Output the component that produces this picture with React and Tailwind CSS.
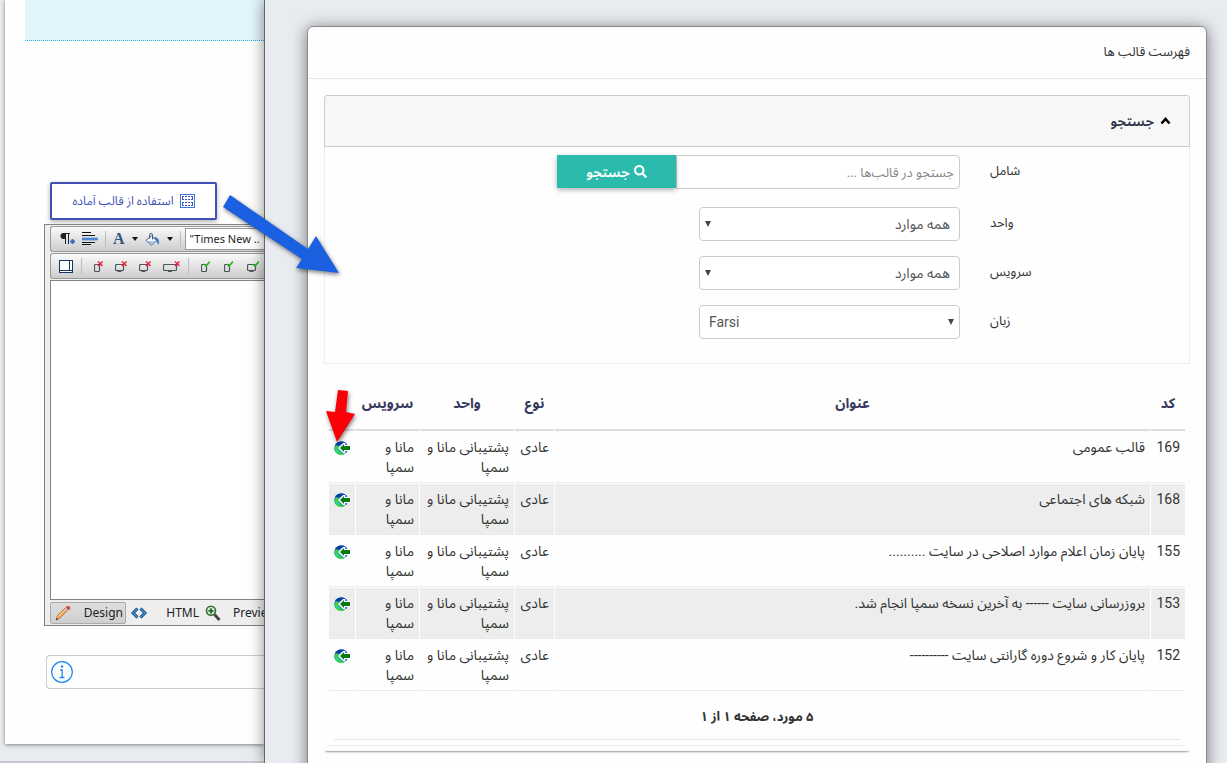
import React, { useState } from 'react';
import { FaSearch } from 'react-icons/fa';

const templates = [
  { code: 169, title: 'قالب عمومی' },
  { code: 168, title: 'شبکه های اجتماعی' },
  { code: 155, title: 'پایان زمان اعلام موارد اصلاحی در سایت ..........' },
  { code: 153, title: 'بروزرسانی سایت ------ به آخرین نسخه سمپا انجام شد.' },
  { code: 152, title: 'پایان کار و شروع دوره گارانتی سایت ----------' },
];

const TemplateIcon = () => (
  <svg width="15" height="14" viewBox="0 0 15 14" fill="none">
    <rect x="0.5" y="0.5" width="14" height="13" stroke="#3a78d0" />
    <path d="M2 2.500h11M2 5.500h11M2 8.500h11M2 11.500h11" stroke="#3f51b5" strokeDasharray="2 1" />
    <path d="M2.500 3v2M12.500 3v2M2.500 9v2M12.500 9v2" stroke="#3f51b5" />
  </svg>
);

const ParagraphIcon = () => (
  <svg width="16" height="16" viewBox="0 0 16 16">
    <path d="M4.5 2H11v1h-1v10H9V3H7v10H6V8H4.500A3 3 0 0 1 4.500 2z" fill="#222" />
    <path d="M11 10.500h5M13.500 8v5" stroke="#2f66c4" strokeWidth="1.800" />
  </svg>
);

const AlignIcon = () => (
  <svg width="16" height="16" viewBox="0 0 16 16">
    <path d="M0 1.500h9M0 4.500h13M0 11.500h13M0 13.500h9" stroke="#111" />
    <rect x="0.5" y="7" width="15" height="2" fill="#5d94e8" stroke="#2f66c4" strokeWidth="0.600" />
  </svg>
);

const BucketIcon = () => (
  <svg width="15" height="15" viewBox="0 0 16 16" fill="none">
    <path d="M1 9l6-5 5 5-5 5z" fill="#f8fbff" stroke="#33557f" />
    <path d="M2 9.500h9L7 13.500z" fill="#a9c4e4" />
    <path d="M5 7V3a1.500 1.500 0 0 1 3 0v5" stroke="#33557f" />
    <path d="M10 6c3-.5 5 1.500 4.500 7-1-1-2-2-2.500-5z" fill="#3d7bd6" stroke="#28559c" strokeWidth="0.500" />
  </svg>
);

const Caret = () => (
  <svg width="6" height="4" viewBox="0 0 6 4">
    <path d="M0 0h6L3 4z" fill="#111" />
  </svg>
);

const PanelIcon = () => (
  <svg width="14" height="13" viewBox="0 0 14 13" fill="#fff">
    <rect x="0.5" y="0.5" width="13" height="12" stroke="#17365f" />
    <path d="M10.500 1v9.500M1 10.500h12" stroke="#17365f" />
  </svg>
);

const ScreenIcon = ({ size, checked }) => {
  const w = { phone: 6, tablet: 9, wide: 14 }[size];
  return (
    <svg width={w + 3} height="13" viewBox={`0 0 ${w + 3} 13`} fill="none">
      <rect x="0.500" y="4.500" width={w - 1} height={size === 'phone' ? 7 : 6} rx="1" stroke="#4f545a" strokeWidth="1.200" />
      {size !== 'phone' && <path d={`M${w / 2 - 2} 11.500h4`} stroke="#4f545a" />}
      {checked ? (
        <path d={`M${w - 3} 4l2 2 4-4.500`} stroke="#1dbb1d" strokeWidth="1.600" />
      ) : (
        <path d={`M${w - 2} 1.500l4.500 4.500M${w + 2.5} 1.500l-4.500 4.500`} stroke="#e8173a" strokeWidth="1.400" />
      )}
    </svg>
  );
};

const PencilIcon = () => (
  <svg width="16" height="16" viewBox="0 0 16 16">
    <path d="M1 15l1.500-4.500L10 3l2.500 2.500-8 8z" fill="#e9a353" stroke="#9b5f22" strokeWidth="0.600" />
    <path d="M3.500 11.500L11 4" stroke="#f9d9a8" />
    <path d="M10.500 2.500L12 1q2-.5 3 1t-.5 2.500l-1 1z" fill="#d9474f" />
    <path d="M10 3l3 3" stroke="#b9bcc4" strokeWidth="1.200" />
    <path d="M1 15l.6-2L3 14.400z" fill="#222" />
  </svg>
);

const CodeIcon = () => (
  <svg width="16" height="12" viewBox="0 0 16 12" fill="none">
    <path d="M6.500 1.500L2 6l4.500 4.500M9.500 1.500L14 6l-4.500 4.500" stroke="#123c69" strokeWidth="3" />
    <path d="M6.500 1.500L2 6l4.500 4.500M9.500 1.500L14 6l-4.500 4.500" stroke="#3c9be0" strokeWidth="1.300" />
  </svg>
);

const PreviewIcon = () => (
  <svg width="16" height="16" viewBox="0 0 16 16" fill="none">
    <path d="M9.500 9.500L14.500 15" stroke="#444" strokeWidth="2.800" />
    <circle cx="6" cy="5.800" r="4.500" fill="#d9ecd6" stroke="#3c6b3c" strokeWidth="1.600" />
    <path d="M6 3.200v5.200M3.400 5.800h5.200" stroke="#1f6a2a" strokeWidth="1.800" />
  </svg>
);

const InsertIcon = () => (
  <svg width="16" height="14" viewBox="0 0 16 14">
    <circle cx="7" cy="7" r="6.800" fill="#2b86e6" />
    <path d="M1 4.500C2 1 6 0 9 .5L12 2 9 3 6 4 3 5z" fill="#0d3a9c" />
    <path d="M.3 7l2-3 2 1v3l3 4 4 .5A6.800 6.800 0 0 1 .3 7z" fill="#35d23c" />
    <path d="M1 8l2 1 1 3q-2.500-1-3-4z" fill="#35c9e8" />
    <path d="M9 2L4 7l5 5h2v-2h5V4h-5V2z" fill="#fff" />
    <path d="M6 7l4-4v2h6v4h-6v2z" fill="#0b7a0b" />
    <path d="M12 10.500h1.500L12 12zM12 3.500h1.500L12 2z" fill="#2b4fd0" />
  </svg>
);

const ToolSeparator = () => <span className="h-4 w-px bg-[#bdbdbd]" />;

const SelectField = ({ id, options, dir }) => (
  <div className="relative w-[261px]" dir={dir}>
    <select
      id={id}
      className="h-[34px] w-full appearance-none rounded border border-[#ccc] bg-white px-[9px] text-sm text-[#555]"
    >
      {options.map((option) => (
        <option key={option}>{option}</option>
      ))}
    </select>
    <svg className="pointer-events-none absolute end-[6px] top-[14px]" width="6" height="6" viewBox="0 0 6 6">
      <path d="M0 0h6L3 6z" fill="#444" />
    </svg>
  </div>
);

const FormRow = ({ id, label, children }) => (
  <div className="flex items-start gap-[30px]">
    <label htmlFor={id} className="w-[199px] shrink-0 text-left text-[13px] leading-8 text-[#333]">
      {label}
    </label>
    {children}
  </div>
);

const EditorPane = () => (
  <aside className="h-screen w-[264px] shrink-0 overflow-hidden border-b-2 border-[#c4c7cb] pl-[5px]">
    <div className="bg-[#fefefe] pb-[55px] shadow-[0_1px_4px_rgba(0,0,0,0.45)]">
      <div className="ml-5 h-[41px] border-b border-dotted border-[#1fb5d8] bg-[#e1f5fb]" />

      <div className="ml-[45px] pt-[141px]">
        <button
          dir="rtl"
          className="flex h-[38px] w-[167px] items-center justify-center gap-[6px] rounded-xs border-2 border-[#3f51b5] bg-white text-xs text-[#3f51b5] shadow-[0_2px_5px_rgba(0,0,0,0.3)]"
        >
          <TemplateIcon />
          استفاده از قالب آماده
        </button>
      </div>

      {/* Rich text editor, cut off by the dialog window */}
      <div className="mt-1 ml-[39px] border border-r-0 border-[#828282] bg-[#eee] pt-px pl-[5px] font-['Noto_Sans',sans-serif] text-xs text-[#222]">
        <div className="flex h-[26px] items-center gap-[7px] overflow-hidden rounded-l-[3px] border border-r-0 border-[#999] bg-linear-to-b from-[#fafafa] to-[#cdcdcd] pl-2 *:shrink-0">
          <ParagraphIcon />
          <AlignIcon />
          <ToolSeparator />
          <span className="font-['Liberation_Serif',serif] text-base font-bold text-[#33557f]">A</span>
          <Caret />
          <BucketIcon />
          <Caret />
          <div className="flex items-center gap-1">
            <ToolSeparator />
            <button className="h-[22px] w-[120px] border border-[#999] bg-white pl-1 text-left text-[11px] whitespace-nowrap">
              "Times New ..
            </button>
          </div>
        </div>
        <div className="mt-px flex h-[26px] items-center gap-2 overflow-hidden rounded-l-[3px] border border-r-0 border-[#999] bg-linear-to-b from-[#fafafa] to-[#cdcdcd] pl-2 *:shrink-0">
          <PanelIcon />
          <ToolSeparator />
          <div className="flex gap-3 pl-1">
            <ScreenIcon size="phone" />
            <ScreenIcon size="tablet" />
            <ScreenIcon size="tablet" />
            <ScreenIcon size="wide" />
          </div>
          <ToolSeparator />
          <div className="flex gap-[14px] pl-1">
            <ScreenIcon size="phone" checked />
            <ScreenIcon size="phone" checked />
            <ScreenIcon size="tablet" checked />
            <ScreenIcon size="tablet" checked />
          </div>
        </div>
        <div className="mt-px h-[320px] border border-r-0 border-[#828282] bg-white" />
        <div className="flex h-[25px] items-center">
          <button className="flex h-[22px] w-[76px] shrink-0 items-center justify-between rounded-xs border border-[#aaa] bg-linear-to-b from-[#dedede] to-[#cfcfcf] px-1 pr-[2px]">
            <PencilIcon />
            Design
          </button>
          <button className="flex w-[73px] shrink-0 items-center justify-between pl-[5px]">
            <CodeIcon />
            HTML
          </button>
          <button className="flex shrink-0 items-center gap-3 pl-[6px]">
            <PreviewIcon />
            Preview
          </button>
        </div>
      </div>

      <div className="mt-[29px] ml-[41px] flex h-[34px] items-center rounded-l border border-r-0 border-[#ccc] pl-1">
        <svg width="22" height="22" viewBox="0 0 22 22" fill="none">
          <circle cx="11" cy="11" r="10.300" stroke="#1e88f0" strokeWidth="1.200" />
          <circle cx="11" cy="5.500" r="1.200" fill="#1e88f0" />
          <path d="M9 9h2.200v7.500M8.500 16.500h5" stroke="#1e88f0" strokeWidth="1.300" />
        </svg>
      </div>
    </div>
  </aside>
);

const SearchPanel = () => {
  const [query, setQuery] = useState('');

  return (
    <div>
      <div className="flex h-[52px] items-center gap-[6px] rounded-t-[3px] border border-[#ccc] bg-[#f7f7f7] px-[18px] text-sm font-semibold text-[#2c3148]">
        <svg width="11" height="8" viewBox="0 0 11 8" fill="none">
          <path d="M1.500 6.500l4-4.500 4 4.500" stroke="#000" strokeWidth="2.600" />
        </svg>
        جستجو
      </div>
      <form
        className="flex flex-col gap-[15px] border border-t-0 border-[#eee] bg-[#fefefe] pt-2 pb-6"
        onSubmit={(e) => e.preventDefault()}
      >
        <FormRow id="query" label="شامل">
          <div className="flex h-[37px] items-start">
            <input
              id="query"
              value={query}
              onChange={(e) => setQuery(e.target.value)}
              placeholder="جستجو در قالب‌ها ..."
              className="h-[34px] w-[284px] rounded-r border border-[#ccc] bg-white px-[5px] text-[13px] placeholder:text-[#888]"
            />
            <button className="flex h-[33px] w-[119px] items-center justify-center gap-1 bg-[#2bbbad] text-sm font-semibold text-white shadow-[0_2px_5px_rgba(0,0,0,0.3)]">
              <FaSearch size={13} />
              جستجو
            </button>
          </div>
        </FormRow>
        <FormRow id="unit" label="واحد">
          <SelectField id="unit" dir="rtl" options={['همه موارد']} />
        </FormRow>
        <FormRow id="service" label="سرویس">
          <SelectField id="service" dir="rtl" options={['همه موارد']} />
        </FormRow>
        <FormRow id="lang" label="زبان">
          <SelectField id="lang" dir="ltr" options={['Farsi', 'English']} />
        </FormRow>
      </form>
    </div>
  );
};

const TemplateTable = () => (
  <div className="-mx-px mt-[9px] rounded bg-[#fefefe] p-[5px] pb-1 shadow-[0_3px_2px_-2px_rgba(0,0,0,0.4)]">
    <table className="w-full table-fixed border-separate border-spacing-px text-sm leading-5 text-[#333]">
      <thead>
        <tr className="h-[52px] text-[#363b5e] *:border-b-2 *:border-[#ddd] *:pb-[2px]">
          <th className="w-[34px]">کد</th>
          <th>عنوان</th>
          <th className="w-[39px]">نوع</th>
          <th className="w-[94px]">واحد</th>
          <th className="w-[63px]">سرویس</th>
          <th className="w-[26px]" aria-label="انتخاب" />
        </tr>
      </thead>
      <tbody>
        {templates.map((item) => (
          <tr key={item.code} className="align-top even:bg-[#ededed] *:border-b *:border-[#e9ebf0] *:p-[5px] *:whitespace-nowrap">
            <td>{item.code}</td>
            <td>{item.title}</td>
            <td>عادی</td>
            <td>پشتیبانی مانا و<br />سمپا</td>
            <td>مانا و<br />سمپا</td>
            <td>
              <button className="mt-1 block" aria-label="انتخاب">
                <InsertIcon />
              </button>
            </td>
          </tr>
        ))}
      </tbody>
      <tfoot>
        <tr>
          <td colSpan={6} className="border-b border-[#eee] p-[5px]">
            <div className="border-b border-[#e5e5e5] pt-[10px] pb-3 text-center text-[13px] leading-5 font-bold">
              ۵ مورد، صفحه ۱ از ۱
            </div>
          </td>
        </tr>
      </tfoot>
    </table>
  </div>
);

export default function App() {
  return (
    <div className="relative flex h-screen overflow-hidden bg-[#e8ebf0] font-['Roboto','Noto_Sans_Arabic','DejaVu_Sans',sans-serif]">
      <EditorPane />

      <main
        dir="rtl"
        className="relative h-screen min-w-0 flex-1 border-l border-[#666] bg-[#e8ebf0] pt-[26px] pr-5 pl-[42px] shadow-[0_0_14px_rgba(0,0,0,0.45)]"
      >
        <div className="rounded-t-md border border-[#8a8a8a] bg-[#fefefe] pb-16 shadow-[0_2px_16px_rgba(0,0,0,0.5)]">
          <h1 className="h-[52px] border-b border-[#e5e5e5] px-4 text-[13px] leading-[50px] text-[#333]">
            فهرست قالب ها
          </h1>
          <div className="px-4 pt-4">
            <SearchPanel />
            <TemplateTable />
          </div>
        </div>
      </main>

      {/* Annotation arrows drawn over the windows */}
      <svg
        className="pointer-events-none absolute top-0 left-0 drop-shadow-[1px_2px_2px_rgba(0,0,0,0.5)]"
        width="370"
        height="460"
        viewBox="0 0 370 460"
      >
        <path d="M230 195L308 249L316 236L339 273L296 268L302 259L223 207z" fill="#1b60e0" />
        <path d="M338 390L348 391L346 412L355 414L337 442L326 411L335 412z" fill="#fb0007" />
      </svg>
    </div>
  );
}
